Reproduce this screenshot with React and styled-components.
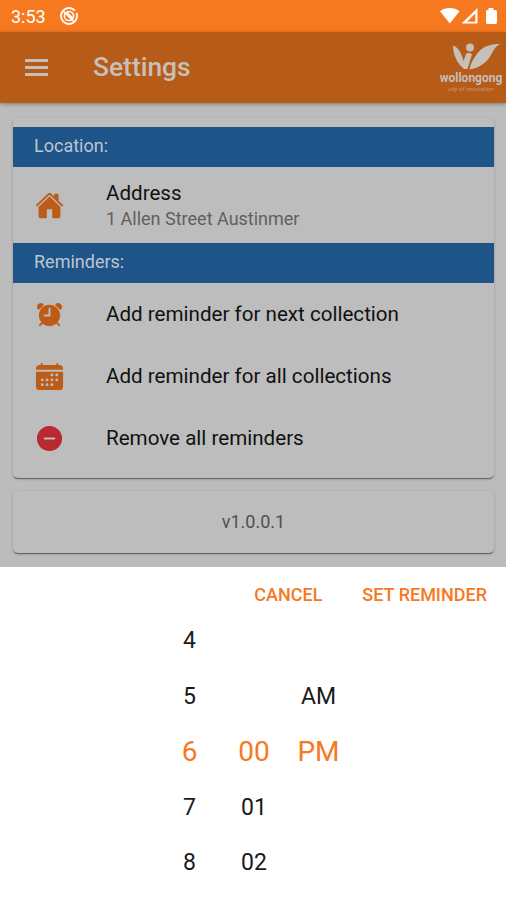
import styled, { createGlobalStyle } from "styled-components";
import { IoAlarm, IoCalendar, IoHome, IoRemoveCircle } from "react-icons/io5";

const reminders = [
  { icon: IoAlarm, label: "Add reminder for next collection" },
  { icon: IoCalendar, label: "Add reminder for all collections" },
  { icon: IoRemoveCircle, label: "Remove all reminders", danger: true },
];

const columns = [
  { name: "hour", width: 41, values: ["4", "5", "6", "7", "8"] },
  { name: "minute", width: 88, values: ["", "", "00", "01", "02"] },
  { name: "period", width: 41, values: ["", "AM", "PM", "", ""] },
];

function App() {
  return (
    <>
      <GlobalStyle />
      <Screen>
        <StatusBar>
          <StClock>3:53</StClock>
          <svg width="20" height="20" viewBox="0 0 20 20" fill="none" stroke="#fff">
            <circle cx="10" cy="10" r="8" strokeWidth="2" strokeDasharray="44 3 3 1" />
            <circle cx="10" cy="10" r="4.6" strokeWidth="1.5" />
            <path d="M4.5 5.5 15 15.5M8 6.5l6 6" strokeWidth="1.7" />
          </svg>
          <StSignals>
            <svg width="62" height="20" viewBox="0 0 62 20" fill="#fff">
              <path d="M0 5.3C5.5.9 14 .9 19.5 5.3L9.8 17.4Z" />
              <path d="M37.5 2v15.5h-16ZM35.3 7.5 27 15.7H35.3Z" fillRule="evenodd" />
              <path d="M48.5 2h5v2h2q1.5 0 1.5 1.5v11q0 1.5-1.5 1.5h-8q-1.5 0-1.5-1.5v-11Q46 4 47.5 4h1Z" />
            </svg>
          </StSignals>
        </StatusBar>

        <Header>
          <MenuButton aria-label="Menu">
            <span />
            <span />
            <span />
          </MenuButton>
          <h1>Settings</h1>
          <LogoBox>
            <svg width="50" height="28" viewBox="0 0 50 28" fill="#c6bfba">
              <circle cx="24" cy="4.500" r="4" />
              <path d="M7 2.500C12 4 15.500 10 17.500 18L20 11C21 9.500 25 9.500 26 11.500L21.500 26H18C11 20 7 12 7 2.500Z" />
              <path d="M54 1C44 1 36 3.500 31 11C27 16 24.500 21 23.500 26.500C33 25 41 20 45.500 11C47.500 7 50 3 54 1Z" />
            </svg>
            <StLogoName>wollongong</StLogoName>
            <StLogoTag>city of innovation</StLogoTag>
          </LogoBox>
        </Header>

        <Content>
          <Card $top={9} $bottom={9}>
            <Divider>Location:</Divider>
            <Item $height={76} $iconSize={29}>
              <IoHome />
              <div>
                <h2>Address</h2>
                <p>1 Allen Street Austinmer</p>
              </div>
            </Item>
            <Divider>Reminders:</Divider>
            {reminders.map(({ icon: Icon, label, danger }) => (
              <Item key={label} $height={62} $danger={danger}>
                <Icon />
                <h2>{label}</h2>
              </Item>
            ))}
          </Card>
          <Card>
            <StVersion>v1.0.0.1</StVersion>
          </Card>
        </Content>

        <PickerSheet>
          <Toolbar>
            <button>CANCEL</button>
            <button>SET REMINDER</button>
          </Toolbar>
          <PickerColumns>
            {columns.map(({ name, width, values }) => (
              <PickerColumn key={name} $width={width}>
                {values.map((value, i) => (
                  <Option key={i} $selected={i === 2}>
                    {value}
                  </Option>
                ))}
              </PickerColumn>
            ))}
          </PickerColumns>
        </PickerSheet>
      </Screen>
    </>
  );
}

export default App;

const GlobalStyle = createGlobalStyle`
  * {
    box-sizing: border-box;
  }
  body {
    margin: 0;
    font-family: Roboto, "Liberation Sans", sans-serif;
  }
  h1, h2, p {
    margin: 0;
    font-weight: 400;
  }
  button {
    border: none;
    background: none;
    font-family: inherit;
    cursor: pointer;
  }
`;

const Screen = styled.div`
  width: 506px;
  height: 900px;
  display: flex;
  flex-direction: column;
  overflow: hidden;
  background-color: #bcbcbc;
`;

const StatusBar = styled.div`
  height: 32px;
  flex-shrink: 0;
  display: flex;
  align-items: center;
  padding: 0 4px 0 11px;
  background-color: #f7791f;
`;

const StClock = styled.span`
  width: 48px;
  color: #fff;
  font-size: 18px;
  line-height: 32px;
  padding-top: 1px;
`;

const StSignals = styled.div`
  display: flex;
  margin-left: auto;
`;

const Header = styled.header`
  height: 71px;
  flex-shrink: 0;
  display: flex;
  align-items: center;
  padding: 0 4px 0 25px;
  background-color: #b65c18;
  box-shadow: 0 1px 4px rgba(0, 0, 0, 0.35);

  & h1 {
    margin-left: 45px;
    color: #c6bfba;
    font-size: 26.4px;
    font-weight: 500;
    line-height: 71px;
  }
`;

const MenuButton = styled.button`
  width: 23px;
  padding: 0;
  display: flex;
  flex-direction: column;
  gap: 4px;

  & span {
    height: 3px;
    background-color: #c6bfba;
  }
`;

const LogoBox = styled.div`
  width: 62px;
  margin-left: auto;
  display: flex;
  flex-direction: column;
  align-items: center;
  color: #c6bfba;

  & svg {
    overflow: visible;
  }
`;

const StLogoName = styled.span`
  font-size: 12px;
  font-weight: 700;
  line-height: 14px;
`;

const StLogoTag = styled.span`
  color: #c79b7b;
  font-size: 6.2px;
  font-style: italic;
  line-height: 8px;
`;

const Content = styled.main`
  height: 464px;
  flex-shrink: 0;
  display: flex;
  flex-direction: column;
  gap: 13px;
  padding: 15px 12px 0 13px;
`;

const Card = styled.section`
  padding: ${({ $top = 0 }) => $top}px 0 ${({ $bottom = 0 }) => $bottom}px;
  border-radius: 5px;
  background-color: #bdbdbd;
  box-shadow: 0 2px 1px -1px rgba(0, 0, 0, 0.4), 0 1px 3px rgba(0, 0, 0, 0.22);
`;

const Divider = styled.div`
  height: 40px;
  padding-left: 21px;
  background-color: #1e5488;
  color: #bdc6cf;
  font-size: 18px;
  line-height: 38px;
`;

const Item = styled.div`
  height: ${({ $height }) => $height}px;
  display: flex;
  align-items: center;
  padding-left: 21px;

  & svg {
    width: 31px;
    height: ${({ $iconSize = 31 }) => $iconSize}px;
    margin-right: 41px;
    color: ${({ $danger }) => ($danger ? "#b9292f" : "#bd5c16")};
  }
  & h2 {
    color: #111;
    font-size: 20.6px;
    line-height: 26px;
  }
  & p {
    color: #606060;
    font-size: 18px;
    line-height: 25px;
  }
`;

const StVersion = styled.p`
  height: 62px;
  color: #505050;
  font-size: 18px;
  line-height: 61px;
  text-align: center;
`;

const PickerSheet = styled.div`
  flex: 1;
  background-color: #fff;
`;

const Toolbar = styled.div`
  height: 45px;
  display: flex;
  justify-content: flex-end;
  gap: 40px;
  padding-right: 19px;

  & button {
    padding: 0;
    color: #f7791f;
    font-size: 18px;
    font-weight: 500;
    line-height: 56px;
  }
`;

const PickerColumns = styled.div`
  display: flex;
  justify-content: center;
  padding-left: 2px;
`;

const PickerColumn = styled.div`
  width: ${({ $width }) => $width}px;
  display: flex;
  flex-direction: column;
  align-items: center;
`;

const Option = styled.div`
  height: 55.5px;
  line-height: 57px;
  white-space: nowrap;
  font-size: ${({ $selected }) => ($selected ? 28 : 23)}px;
  color: ${({ $selected }) => ($selected ? "#f7791f" : "#1a1a1a")};
`;
